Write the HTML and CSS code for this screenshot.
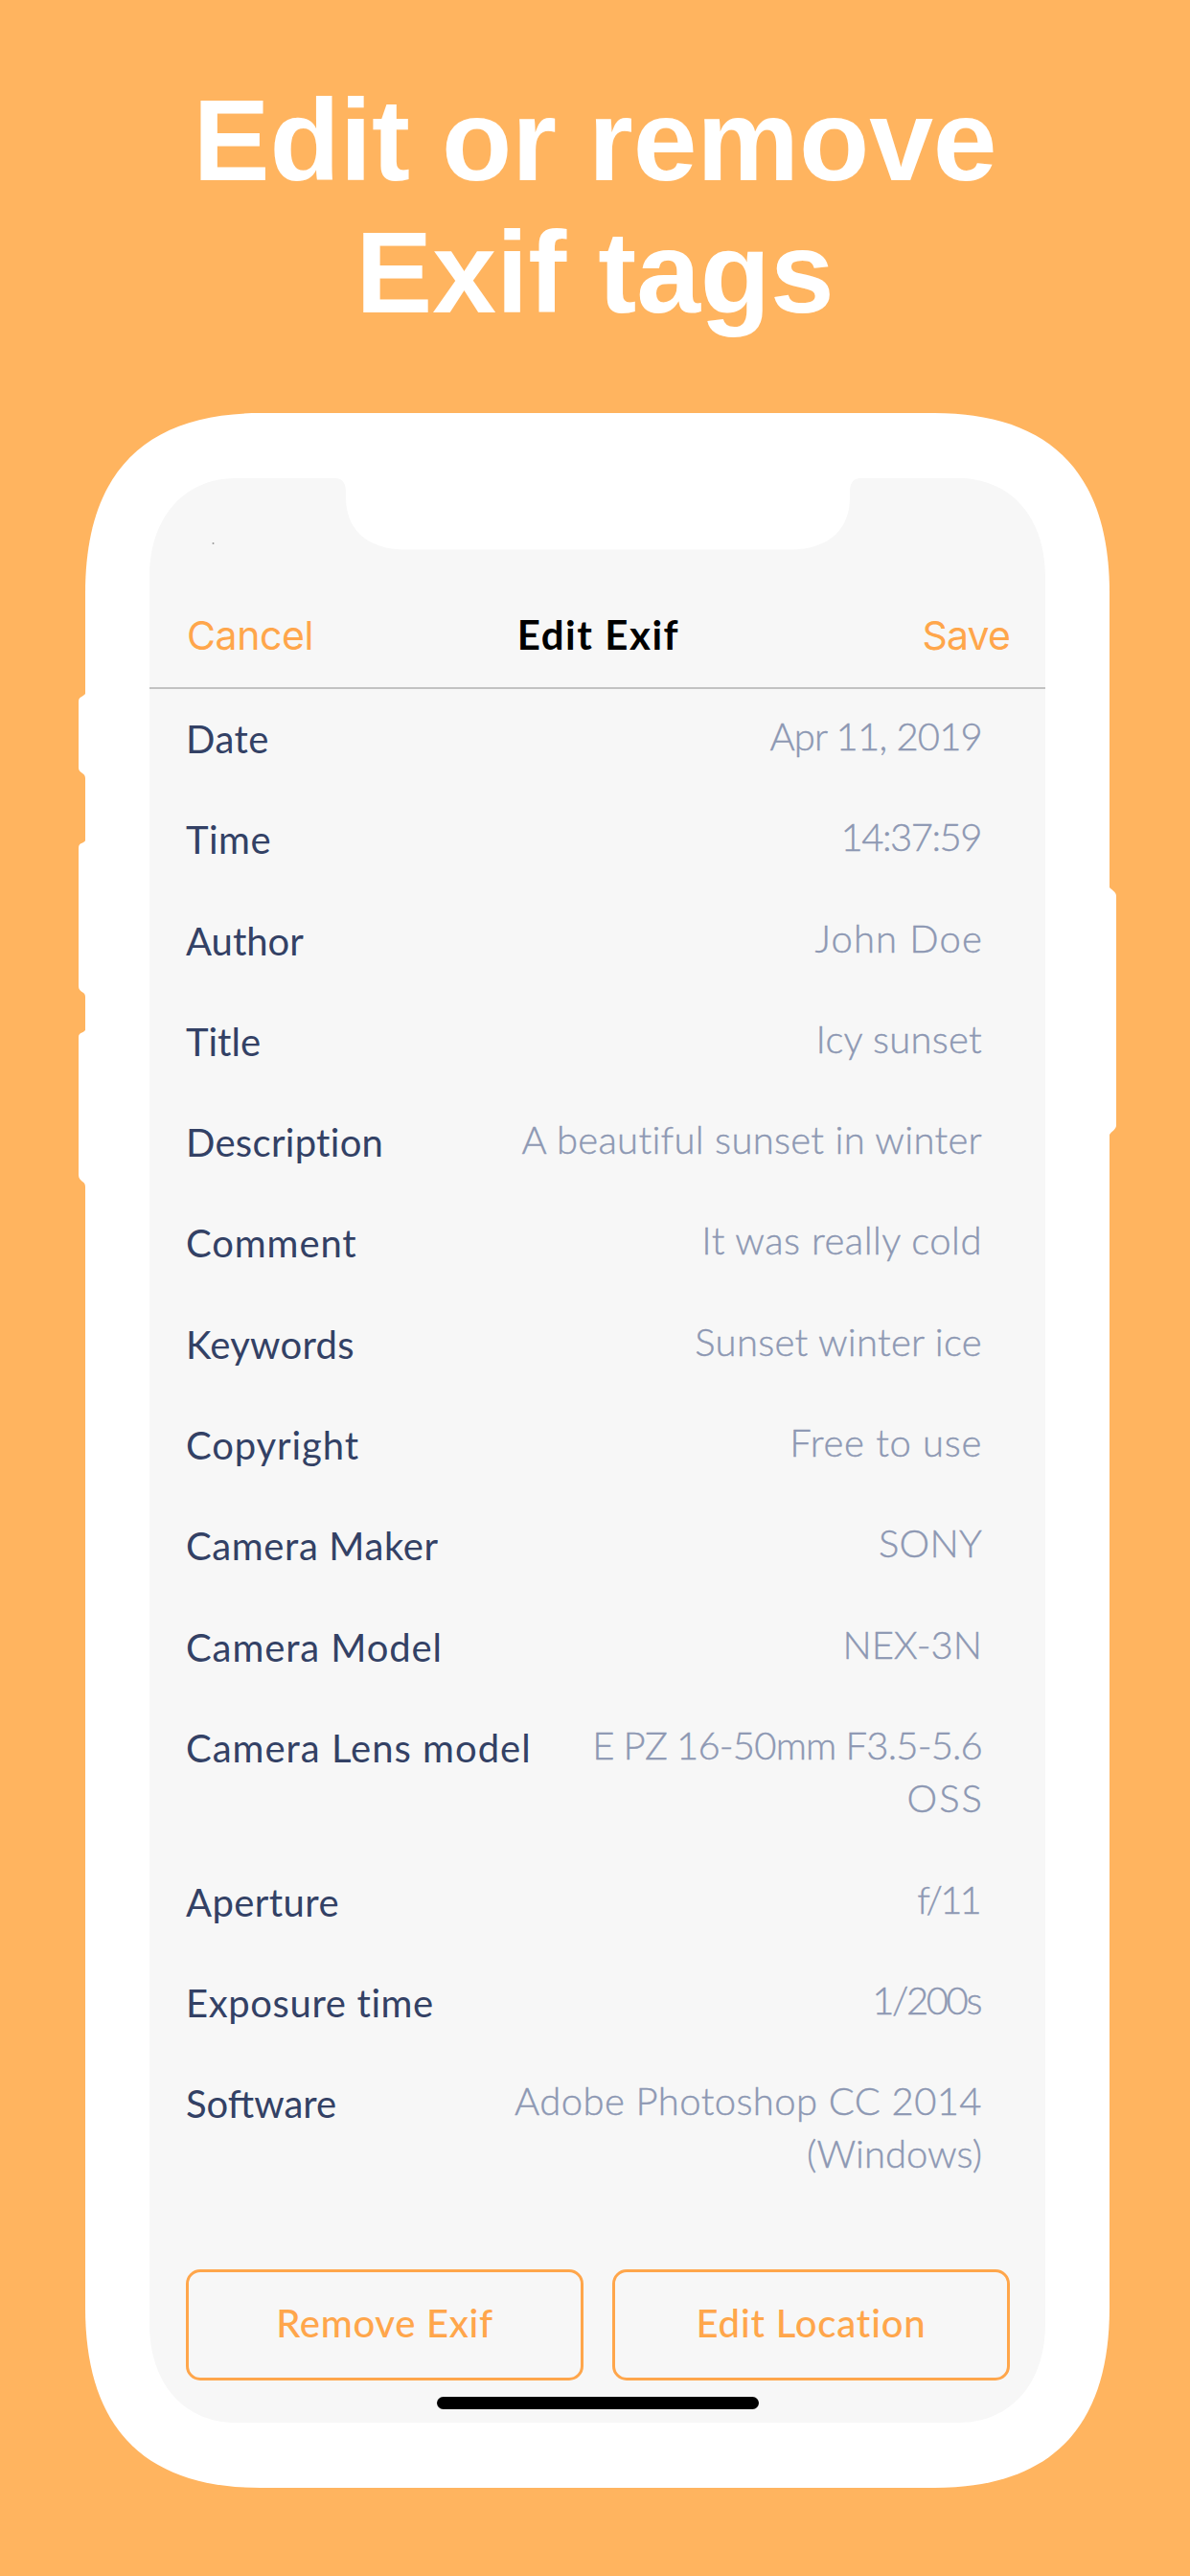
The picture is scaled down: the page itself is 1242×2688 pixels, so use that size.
FILE: index.html
```html
<!DOCTYPE html>
<html lang="en">
<head>
<meta charset="utf-8">
<title>Edit or remove Exif tags</title>
<link rel="stylesheet" href="styles.css">
</head>
<body>
<main class="poster">
  <h1 class="headline">Edit or remove<br>Exif tags</h1>
  <section class="phone">
    <svg class="frame" viewBox="82 431 1083 2165" width="1083" height="2165" aria-hidden="true">
      <!-- body -->
      <path fill="#fff" d="M89 619C89 491 153 431 272 431H975C1094 431 1158 491 1158 619V2408C1158 2536 1094 2596 975 2596H272C153 2596 89 2536 89 2408Z"/>
      <!-- side buttons -->
      <path fill="#fff" d="M90 722C89 727 82 726 82 732V801C82 807 89 806 89 812H92V722Z"/>
      <path fill="#fff" d="M90 875C89 881 82 878 82 885V1029C82 1036 89 1034 89 1040H92V875Z"/>
      <path fill="#fff" d="M90 1072C89 1079 82 1076 82 1082V1226C82 1233 89 1232 89 1238H92V1072Z"/>
      <path fill="#fff" d="M1157 925C1160 929 1165 930 1165 935V1174C1165 1179 1160 1180 1158 1184H1155V925Z"/>
      <!-- screen with notch -->
      <path fill="#f7f7f7" d="M156 602C156 538 194 499 246 499H350C357 499 361 504 361 513V519C361 550 380 573.500 424 573.500H824C868 573.500 887 550 887 519V513C887 504 891 499 898 499H1001C1053 499 1091 538 1091 602V2425C1091 2489 1053 2528 1001 2528H246C194 2528 156 2489 156 2425Z"/>
      <circle cx="222.500" cy="567" r="1" fill="#999"/>
    </svg>
    <div class="screen">
      <header class="bar">
        <span class="action">Cancel</span>
        <h2 class="title">Edit Exif</h2>
        <span class="action save">Save</span>
      </header>
      <dl class="tags">
        <div class="row"><dt class="t5">Date</dt><dd class="n8">Apr 11, 2019</dd></div>
        <div class="row"><dt class="t5">Time</dt><dd class="n15">14:37:59</dd></div>
        <div class="row"><dt>Author</dt><dd class="t11">John Doe</dd></div>
        <div class="row"><dt>Title</dt><dd class="t25">Icy sunset</dd></div>
        <div class="row"><dt class="t3">Description</dt><dd class="t3">A beautiful sunset in winter</dd></div>
        <div class="row"><dt class="t9">Comment</dt><dd class="t5">It was really cold</dd></div>
        <div class="row"><dt class="t3">Keywords</dt><dd class="t3">Sunset winter ice</dd></div>
        <div class="row"><dt class="t9">Copyright</dt><dd class="t7">Free to use</dd></div>
        <div class="row"><dt class="t6">Camera Maker</dt><dd class="t25">SONY</dd></div>
        <div class="row"><dt class="t9">Camera Model</dt><dd>NEX-3N</dd></div>
        <div class="row"><dt class="t10">Camera Lens model</dt><dd><span class="line n8">E PZ 16-50mm F3.5-5.6</span><span class="line t20">OSS</span></dd></div>
        <div class="row"><dt class="t4">Aperture</dt><dd class="n28">f/11</dd></div>
        <div class="row"><dt class="t6">Exposure time</dt><dd class="n24">1/200s</dd></div>
        <div class="row"><dt>Software</dt><dd><span class="line t4">Adobe Photoshop CC 2014</span><span class="line">(Windows)</span></dd></div>
      </dl>
      <footer class="foot">
        <div class="buttons">
          <button class="btn t7">Remove Exif</button>
          <button class="btn t8">Edit Location</button>
        </div>
        <div class="home"></div>
      </footer>
    </div>
  </section>
</main>
</body>
</html>
```
FILE: styles.css
```css
* { box-sizing: border-box; margin: 0; padding: 0; }

body {
  background: #ffb45f;
  font-family: Lato, "Open Sans", sans-serif;
  font-size: 40px;
}

.poster {
  width: 1242px;
  height: 2688px;
  padding-top: 77px;
  overflow: hidden;
}

.headline {
  height: 354px;
  font: 700 120px/138px "Liberation Sans", Arial, sans-serif;
  letter-spacing: -0.1px;
  color: #fff;
  text-align: center;
}

/* Phone */
.phone {
  position: relative;
  width: 1083px;
  height: 2165px;
  margin-left: 82px;
  padding: 68px 74px;
}

.frame { position: absolute; inset: 0; }

.screen {
  position: relative;
  display: flex;
  flex-direction: column;
  width: 935px;
  height: 2029px;
}

/* Navigation bar */
.bar {
  display: grid;
  grid-template-columns: 1fr auto 1fr;
  align-items: baseline;
  height: 220px;
  padding: 138px 37px 0 39px;
  border-bottom: 2px solid #c2c2c2;
  line-height: 50px;
}

.title {
  font-size: 42px;
  font-weight: 700;
  letter-spacing: 1.55px;
  color: #000;
}

.action {
  font-family: Inter, sans-serif;
  font-size: 41px;
  letter-spacing: -0.4px;
  color: #ffa64b;
}

.save { text-align: right; letter-spacing: -0.85px; }

/* Tag list */
.tags { padding: 22px 66px 0 38px; }

.row {
  display: flex;
  justify-content: space-between;
  align-items: flex-start;
  padding-bottom: 50px;
}

dt {
  padding-top: 5px;
  line-height: 50px;
  color: #334165;
  white-space: nowrap;
}

dd {
  line-height: 55.3px;
  font-weight: 300;
  color: #8d98b3;
  -webkit-text-stroke: 0.4px #8d98b3;
  text-align: right;
  white-space: nowrap;
}

.line { display: block; }

/* Tracking */
.t25 { letter-spacing: 0.25px; }
.t3 { letter-spacing: 0.3px; }
.t4 { letter-spacing: 0.42px; }
.t5 { letter-spacing: 0.5px; }
.t6 { letter-spacing: 0.62px; }
.t7 { letter-spacing: 0.7px; }
.t8 { letter-spacing: 0.82px; }
.t9 { letter-spacing: 0.9px; }
.t10 { letter-spacing: 1px; }
.t11 { letter-spacing: 1.15px; margin-right: -1px; }
.t20 { letter-spacing: 2px; margin-right: -2px; }
.n8 { letter-spacing: -0.8px; }
.n15 { letter-spacing: -1.5px; margin-right: 1px; }
.n24 { letter-spacing: -2.4px; margin-right: 2px; }
.n28 { letter-spacing: -2.8px; margin-right: 3px; }

/* Footer */
.foot { margin-top: auto; padding: 0 37px 14px 38px; }

.buttons {
  display: grid;
  grid-template-columns: 1fr 1fr;
  gap: 30px;
}

.btn {
  height: 116px;
  padding-bottom: 4px;
  border: 3px solid #ffa64b;
  border-radius: 15px;
  background: none;
  font-family: inherit;
  font-size: 40px;
  font-weight: 500;
  color: #ffa64b;
}

.home {
  width: 336px;
  height: 13px;
  margin: 17px auto 0;
  border-radius: 7px;
  background: #000;
}
```
